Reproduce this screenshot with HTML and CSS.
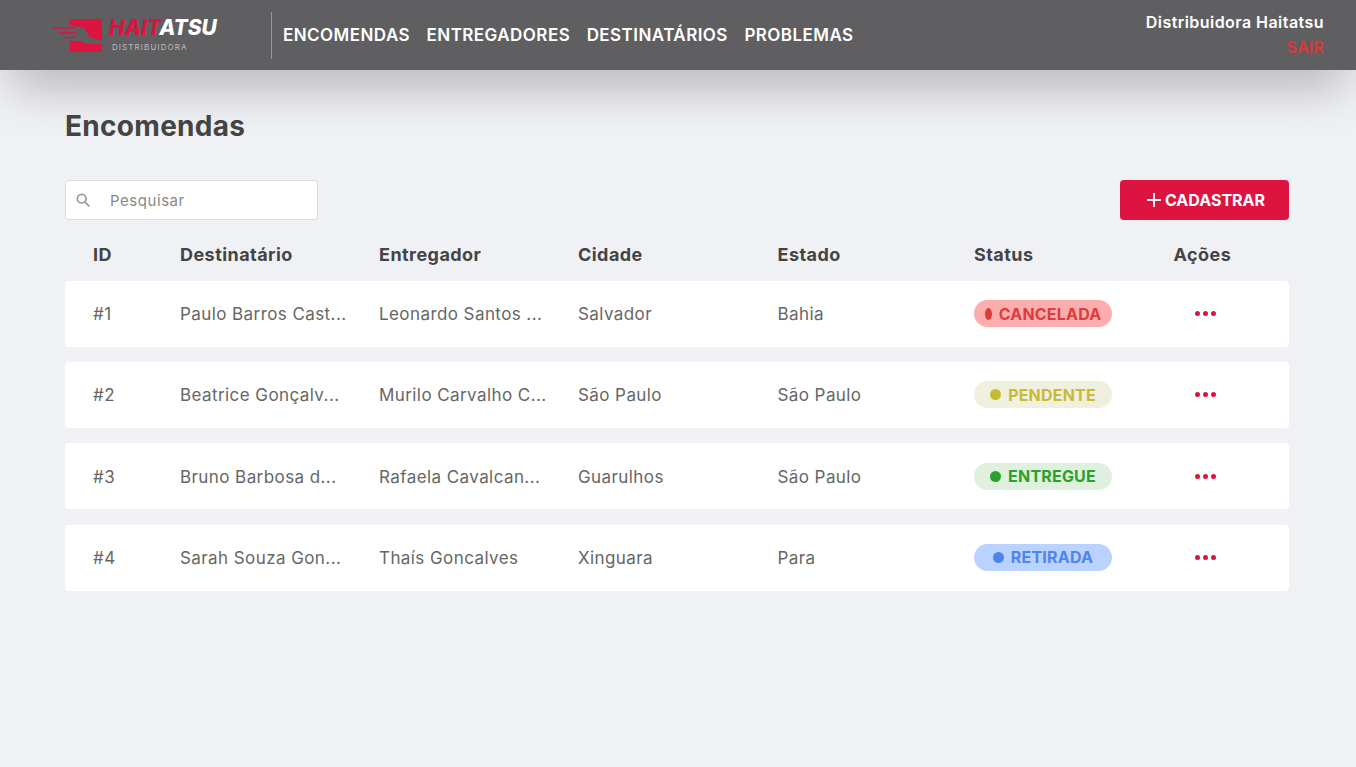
FILE: index.html
```html
<!DOCTYPE html>
<html lang="pt-BR">
<head>
  <meta charset="UTF-8" />
  <title>Encomendas</title>
  <link rel="stylesheet" href="styles.css">
</head>
<body>
  <header class="topbar">
    <div class="logo">
      <svg class="logo-mark" width="50" height="34" viewBox="0 0 50 34">
        <path d="M16.5 0H49V33H16.5V22H28L33 25H49V22L37 18L31 9L16.5 6Z" fill="#dd1440"/>
        <path d="M0 9H22M5 14H24M11 18.5H23" stroke="#dd1440" stroke-width="1.4"/>
      </svg>
      <div class="logo-text">
        <div class="logo-name"><span class="logo-red">HAIT</span>ATSU</div>
        <div class="logo-sub">DISTRIBUIDORA</div>
      </div>
    </div>
    <nav class="menu">
      <a href="#">ENCOMENDAS</a>
      <a href="#">ENTREGADORES</a>
      <a href="#">DESTINATÁRIOS</a>
      <a href="#">PROBLEMAS</a>
    </nav>
    <div class="account">
      <div class="account-name">Distribuidora Haitatsu</div>
      <a class="logout" href="#">SAIR</a>
    </div>
  </header>

  <main class="content">
    <h1>Encomendas</h1>

    <div class="toolbar">
      <label class="search">
        <svg width="16" height="16" viewBox="0 0 24 24" fill="none" stroke="#999" stroke-width="2.6"><circle cx="10" cy="10" r="6.5"/><path d="M15 15l6.5 6.5"/></svg>
        <input type="text" placeholder="Pesquisar">
      </label>
      <button class="add-button">
        <svg width="16" height="16" viewBox="0 0 16 16" stroke="#fff" stroke-width="1.8"><path d="M8 1v14M1 8h14"/></svg>
        CADASTRAR
      </button>
    </div>

    <div class="table-head row-grid">
      <div>ID</div><div>Destinatário</div><div>Entregador</div><div>Cidade</div><div>Estado</div><div>Status</div><div>Ações</div>
    </div>

    <div class="order row-grid">
      <div>#1</div><div class="cut">Paulo Barros Cast...</div><div class="cut">Leonardo Santos ...</div><div>Salvador</div><div>Bahia</div>
      <div><span class="badge canceled"><i class="dot squeezed"></i>CANCELADA</span></div>
      <div class="dots"><i></i><i></i><i></i></div>
    </div>
    <div class="order row-grid">
      <div>#2</div><div class="cut">Beatrice Gonçalv...</div><div class="cut">Murilo Carvalho C...</div><div>São Paulo</div><div>São Paulo</div>
      <div><span class="badge pending"><i class="dot"></i>PENDENTE</span></div>
      <div class="dots"><i></i><i></i><i></i></div>
    </div>
    <div class="order row-grid">
      <div>#3</div><div class="cut">Bruno Barbosa d...</div><div class="cut">Rafaela Cavalcan...</div><div>Guarulhos</div><div>São Paulo</div>
      <div><span class="badge delivered"><i class="dot"></i>ENTREGUE</span></div>
      <div class="dots"><i></i><i></i><i></i></div>
    </div>
    <div class="order row-grid">
      <div>#4</div><div class="cut">Sarah Souza Gon...</div><div class="cut">Thaís Goncalves</div><div>Xinguara</div><div>Para</div>
      <div><span class="badge picked"><i class="dot"></i>RETIRADA</span></div>
      <div class="dots"><i></i><i></i><i></i></div>
    </div>
  </main>
</body>
</html>
```

FILE: styles.css
```css
* {
  box-sizing: border-box;
}
body {
  margin: 0;
  min-height: 767px;
  background: #f0f1f5;
  font-family: Inter, "Noto Sans", sans-serif;
  color: #444;
  overflow: hidden;
}
a {
  text-decoration: none;
}

.topbar {
  height: 70px;
  background: #5f5f61;
  display: flex;
  align-items: center;
  padding: 0 32px 0 53px;
  box-shadow: 0 25px 50px -10px rgba(0,0,0,0.28);
}
.logo {
  display: flex;
  align-items: center;
  gap: 6px;
  width: 219px;
  height: 47px;
  border-right: 1px solid #999;
}
.logo-mark {
  margin-top: 2px;
}
.logo-name {
  font-size: 21px;
  line-height: 20px;
  font-weight: 800;
  font-style: italic;
  color: #fff;
}
.logo-red {
  color: #dd1440;
}
.logo-sub {
  font-size: 8px;
  letter-spacing: 1.1px;
  color: #bbb;
  margin-top: 4px;
  margin-left: 3px;
}
.menu {
  display: flex;
  gap: 16.5px;
  margin-left: 11px;
}
.menu a {
  color: #fff;
  font-size: 17px;
  font-weight: 600;
  letter-spacing: 0.45px;
}
.account {
  margin-left: auto;
  text-align: right;
}
.account-name {
  color: #fff;
  font-size: 16px;
  line-height: 20px;
  font-weight: 600;
  letter-spacing: 0.45px;
  margin-top: -1px;
}
.logout {
  display: block;
  color: #dc3838;
  font-size: 16px;
  line-height: 20px;
  font-weight: 600;
  letter-spacing: 0.2px;
  margin-top: 5px;
}

.content {
  padding: 0 67px 0 65px;
}
h1 {
  font-size: 28px;
  line-height: 32px;
  font-weight: 700;
  letter-spacing: 0.3px;
  color: #444;
  margin: 40px 0 38px;
}
.toolbar {
  display: flex;
  justify-content: space-between;
  height: 40px;
}
.search {
  width: 253px;
  background: #fff;
  border: 1px solid #ddd;
  border-radius: 4px;
  display: flex;
  align-items: center;
  padding-left: 9px;
  gap: 17px;
}
.search input {
  border: 0;
  outline: 0;
  flex: 1;
  min-width: 0;
  font: inherit;
  font-size: 15px;
  letter-spacing: 0.55px;
}
.search input::placeholder {
  color: #888;
}
.add-button {
  width: 169px;
  border: 0;
  border-radius: 4px;
  padding: 0 0 0 2px;
  background: #dd1440;
  color: #fff;
  font: inherit;
  font-size: 16px;
  font-weight: 700;
  display: flex;
  align-items: center;
  justify-content: center;
  gap: 3px;
}

.row-grid {
  display: grid;
  grid-template-columns: 87px 199px 199px 199.5px 196.5px 199.5px 1fr;
  align-items: center;
  padding-left: 28px;
}
.table-head {
  height: 61px;
  padding-top: 7px;
  font-size: 18px;
  font-weight: 700;
  letter-spacing: 0.45px;
  color: #444;
}
.order {
  height: 66px;
  background: #fff;
  border-radius: 4px;
  margin-bottom: 15.2px;
  padding-top: 0.6px;
  font-size: 17px;
  letter-spacing: 0.42px;
  color: #666;
}
.cut {
  white-space: nowrap;
  overflow: hidden;
}

.badge {
  display: flex;
  align-items: center;
  justify-content: center;
  width: 138px;
  height: 27px;
  margin-bottom: 1.2px;
  border-radius: 14px;
  font-size: 16px;
  font-weight: 700;
  letter-spacing: 0.2px;
  gap: 7px;
}
.dot {
  width: 11px;
  height: 11px;
  border-radius: 50%;
  background: currentColor;
}
.dot.squeezed {
  width: 7px;
  height: 12px;
}
.canceled { background: #fdadad; color: #de3b3b; }
.pending { background: #f0f0df; color: #c7bb35; }
.delivered { background: #dff0df; color: #2ca02c; }
.picked { background: #bad2ff; color: #4d85ee; }

.dots {
  display: flex;
  gap: 3px;
  padding-left: 21px;
  margin-bottom: 1.2px;
}
.dots i {
  width: 5px;
  height: 5px;
  border-radius: 50%;
  background: #dd1440;
}
```
